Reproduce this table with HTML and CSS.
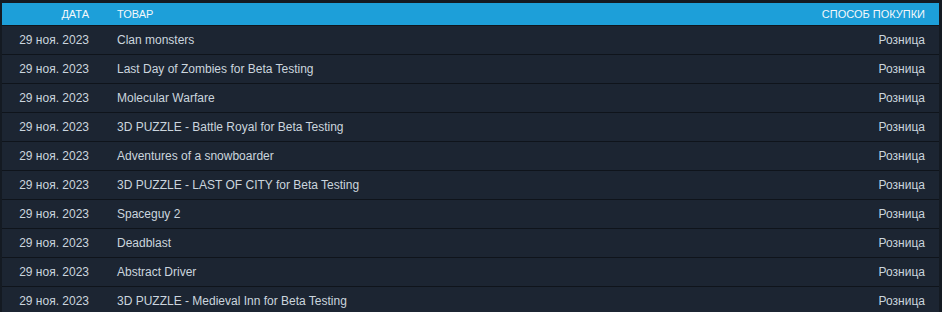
FILE: index.html
```html
<!DOCTYPE html>
<html lang="ru">
<head>
<meta charset="utf-8">
<link rel="stylesheet" href="styles.css">
</head>
<body>
<div class="wrap">
<table class="licenses">
<thead>
<tr><th class="c-date">Дата</th><th class="c-item">Товар</th><th class="c-method">Способ покупки</th></tr>
</thead>
<tbody>
<tr><td class="c-date">29 ноя. 2023</td><td class="c-item">Clan monsters</td><td class="c-method">Розница</td></tr>
<tr><td class="c-date">29 ноя. 2023</td><td class="c-item">Last Day of Zombies for Beta Testing</td><td class="c-method">Розница</td></tr>
<tr><td class="c-date">29 ноя. 2023</td><td class="c-item">Molecular Warfare</td><td class="c-method">Розница</td></tr>
<tr><td class="c-date">29 ноя. 2023</td><td class="c-item">3D PUZZLE - Battle Royal for Beta Testing</td><td class="c-method">Розница</td></tr>
<tr><td class="c-date">29 ноя. 2023</td><td class="c-item">Adventures of a snowboarder</td><td class="c-method">Розница</td></tr>
<tr><td class="c-date">29 ноя. 2023</td><td class="c-item">3D PUZZLE - LAST OF CITY for Beta Testing</td><td class="c-method">Розница</td></tr>
<tr><td class="c-date">29 ноя. 2023</td><td class="c-item">Spaceguy 2</td><td class="c-method">Розница</td></tr>
<tr><td class="c-date">29 ноя. 2023</td><td class="c-item">Deadblast</td><td class="c-method">Розница</td></tr>
<tr><td class="c-date">29 ноя. 2023</td><td class="c-item">Abstract Driver</td><td class="c-method">Розница</td></tr>
<tr><td class="c-date">29 ноя. 2023</td><td class="c-item">3D PUZZLE - Medieval Inn for Beta Testing</td><td class="c-method">Розница</td></tr>
</tbody>
</table>
</div>
</body>
</html>
```

FILE: styles.css
```css
html, body {
  margin: 0;
  padding: 0;
  background: #141a22;
}
body {
  font-family: "Liberation Sans", Arial, sans-serif;
  font-size: 12px;
}
.wrap {
  padding: 3px 3px 0 2px;
}
.licenses {
  width: 100%;
  border-collapse: collapse;
  background: #1c2532;
  color: #cbd5de;
}
.licenses th {
  background: #1d9fd9;
  color: #f4f8fb;
  font-size: 11px;
  font-weight: normal;
  text-transform: uppercase;
  height: 22px;
  padding: 0;
  border-bottom: 1px solid #11161d;
  text-align: left;
}
.licenses td {
  height: 28px;
  padding: 0;
  border-bottom: 1px solid #0f141b;
}
.c-date {
  width: 87px;
  text-align: right !important;
  padding-right: 0 !important;
}
.licenses .c-item {
  padding-left: 28px;
}
.licenses .c-method {
  text-align: right;
  padding-right: 14px;
}
```
